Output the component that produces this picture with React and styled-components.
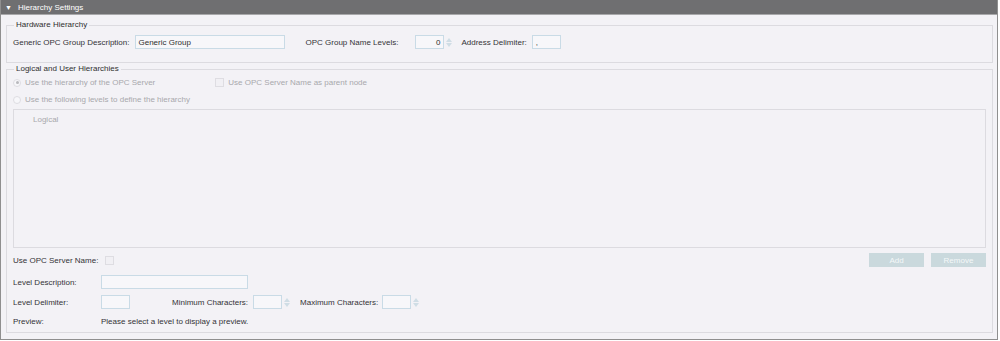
import React from 'react';
import styled, { createGlobalStyle } from 'styled-components';

const GlobalStyle = createGlobalStyle`
  html, body {
    margin: 0;
    padding: 0;
    background: #ffffff;
  }
  body {
    font-family: "Liberation Sans", Arial, sans-serif;
    font-size: 8px;
    color: #3a3a3a;
  }
`;

const Panel = styled.div`
  width: 998px;
  height: 340px;
  box-sizing: border-box;
  background: #f3f2f6;
  border: 1px solid #8f8f8f;
  border-top: none;
  display: flex;
  flex-direction: column;
`;

const Header = styled.div`
  flex: none;
  height: 14px;
  background: #6f6f71;
  color: #ffffff;
  display: flex;
  align-items: center;
  gap: 6px;
  padding-left: 4px;
  font-size: 8px;
  border-bottom: 1px solid #a8a8aa;
`;

const Caret = styled.span`
  font-size: 7px;
  line-height: 1;
`;

const Body = styled.div`
  padding: 5px 4px 0 5px;
  display: flex;
  flex-direction: column;
  gap: 1px;
`;

const Group = styled.fieldset`
  margin: 0;
  padding: 0 6px;
  border: 1px solid #dcdbe0;
  min-width: 0;
  box-sizing: border-box;
  height: ${({ h }) => h}px;
`;

const Legend = styled.legend`
  padding: 0 2px;
  margin-left: 1px;
  font-size: 8px;
  color: #2f2f2f;
  line-height: 10px;
`;

const Row = styled.div`
  display: flex;
  align-items: center;
  height: ${({ h }) => h || 14}px;
  margin-top: ${({ mt }) => mt || 0}px;
`;

const Label = styled.span`
  color: ${({ muted }) => (muted ? '#a8a8ac' : '#333336')};
  white-space: nowrap;
  margin-left: ${({ ml }) => ml || 0}px;
  width: ${({ w }) => (w ? `${w}px` : 'auto')};
  flex: none;
`;

const Input = styled.div`
  width: ${({ w }) => w}px;
  height: 14px;
  box-sizing: border-box;
  border: 1px solid #c9dbe6;
  background: #f7f7fa;
  margin-left: ${({ ml }) => ml || 0}px;
  display: flex;
  align-items: center;
  justify-content: ${({ right }) => (right ? 'flex-end' : 'flex-start')};
  padding: 0 3px;
  color: #2f2f2f;
  flex: none;
`;

const Spin = styled.span`
  display: inline-flex;
  flex-direction: column;
  justify-content: center;
  margin-left: 2px;
  gap: 1px;
  flex: none;
`;

const Arrow = styled.span`
  width: 0;
  height: 0;
  border-left: 3px solid transparent;
  border-right: 3px solid transparent;
  ${({ down }) => (down ? 'border-top: 4px solid #cfdde5;' : 'border-bottom: 4px solid #cfdde5;')}
`;

const Radio = styled.span`
  width: 8px;
  height: 8px;
  border-radius: 50%;
  border: 1px solid #dedde2;
  background: #f7f7fa;
  box-sizing: border-box;
  display: inline-flex;
  align-items: center;
  justify-content: center;
  margin-right: 4px;
  flex: none;
  &::after {
    content: '';
    display: ${({ checked }) => (checked ? 'block' : 'none')};
    width: 3px;
    height: 3px;
    border-radius: 50%;
    background: #b8b8bc;
  }
`;

const Check = styled.span`
  width: 9px;
  height: 9px;
  border: 1px solid #dedde2;
  background: #f1f0f4;
  box-sizing: border-box;
  margin-left: ${({ ml }) => ml || 0}px;
  margin-right: 4px;
  flex: none;
`;

const ListBox = styled.div`
  height: 139px;
  margin-top: 3px;
  border: 1px solid #dcdbe0;
  box-sizing: border-box;
  padding: 5px 19px;
  color: #a8a8ac;
`;

const Spacer = styled.div`
  flex: 1;
`;

const Button = styled.div`
  width: 55px;
  height: 14px;
  background: #cad9dd;
  color: #f4f8f9;
  display: flex;
  align-items: center;
  justify-content: center;
  margin-left: ${({ ml }) => ml || 0}px;
`;

const Spinner = () => (
  <Spin>
    <Arrow />
    <Arrow down />
  </Spin>
);

export default function App() {
  return (
    <>
      <GlobalStyle />
      <Panel>
        <Header>
          <Caret>▼</Caret>
          <span>Hierarchy Settings</span>
        </Header>
        <Body>
          <Group h={43}>
            <Legend>Hardware Hierarchy</Legend>
            <Row mt={5}>
              <Label>Generic OPC Group Description:</Label>
              <Input w={150} ml={5}>Generic Group</Input>
              <Label ml={21}>OPC Group Name Levels:</Label>
              <Input w={29} ml={17} right>0</Input>
              <Spinner />
              <Label ml={9}>Address Delimiter:</Label>
              <Input w={29} ml={5}>,</Input>
            </Row>
          </Group>
          <Group h={269}>
            <Legend>Logical and User Hierarchies</Legend>
            <Row h={13} mt={2}>
              <Radio checked />
              <Label muted>Use the hierarchy of the OPC Server</Label>
              <Check ml={60} />
              <Label muted>Use OPC Server Name as parent node</Label>
            </Row>
            <Row h={13} mt={4}>
              <Radio />
              <Label muted>Use the following levels to define the hierarchy</Label>
            </Row>
            <ListBox>Logical</ListBox>
            <Row mt={5}>
              <Label w={92}>Use OPC Server Name:</Label>
              <Check />
              <Spacer />
              <Button>Add</Button>
              <Button ml={7}>Remove</Button>
            </Row>
            <Row mt={8}>
              <Label w={88}>Level Description:</Label>
              <Input w={147} />
            </Row>
            <Row mt={6}>
              <Label w={88}>Level Delimiter:</Label>
              <Input w={29} />
              <Label ml={42}>Minimum Characters:</Label>
              <Input w={29} ml={5} />
              <Spinner />
              <Label ml={10}>Maximum Characters:</Label>
              <Input w={29} ml={4} />
              <Spinner />
            </Row>
            <Row mt={5}>
              <Label w={88}>Preview:</Label>
              <Label>Please select a level to display a preview.</Label>
            </Row>
          </Group>
        </Body>
      </Panel>
    </>
  );
}
